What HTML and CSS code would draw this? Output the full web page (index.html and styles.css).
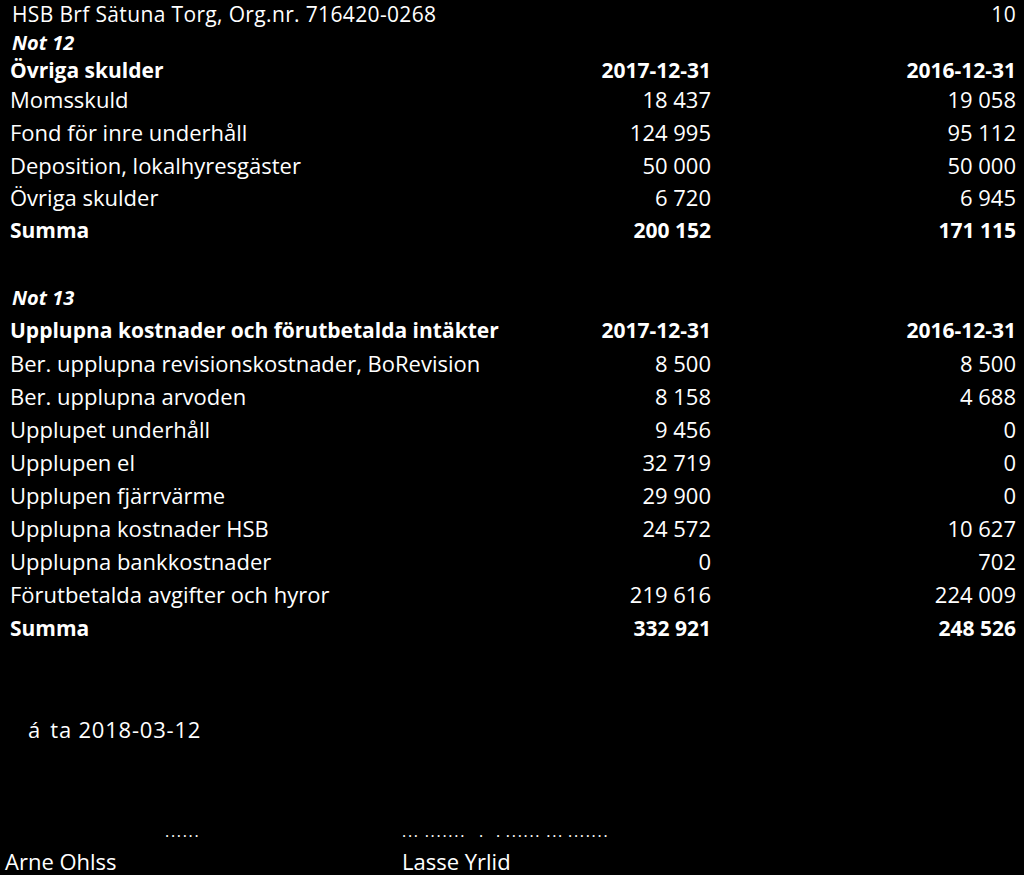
FILE: index.html
```html
<!DOCTYPE html>
<html lang="sv">
<head>
<meta charset="utf-8">
<title>Not 12 och 13</title>
<link rel="stylesheet" href="styles.css">
</head>
<body>
<div class="page">
  <div class="topline">
    <span>HSB Brf Sätuna Torg, Org.nr. 716420-0268</span>
    <span>10</span>
  </div>

  <section class="note note-12">
    <div class="note-title">Not 12</div>
    <div class="row head"><span>Övriga skulder</span><span class="num">2017-12-31</span><span class="num">2016-12-31</span></div>
    <div class="row"><span>Momsskuld</span><span class="num">18 437</span><span class="num">19 058</span></div>
    <div class="row"><span>Fond för inre underhåll</span><span class="num">124 995</span><span class="num">95 112</span></div>
    <div class="row"><span>Deposition, lokalhyresgäster</span><span class="num">50 000</span><span class="num">50 000</span></div>
    <div class="row"><span>Övriga skulder</span><span class="num">6 720</span><span class="num">6 945</span></div>
    <div class="row sum"><span>Summa</span><span class="num">200 152</span><span class="num">171 115</span></div>
  </section>

  <section class="note note-13">
    <div class="note-title">Not 13</div>
    <div class="row head"><span>Upplupna kostnader och förutbetalda intäkter</span><span class="num">2017-12-31</span><span class="num">2016-12-31</span></div>
    <div class="row"><span>Ber. upplupna revisionskostnader, BoRevision</span><span class="num">8 500</span><span class="num">8 500</span></div>
    <div class="row"><span>Ber. upplupna arvoden</span><span class="num">8 158</span><span class="num">4 688</span></div>
    <div class="row"><span>Upplupet underhåll</span><span class="num">9 456</span><span class="num">0</span></div>
    <div class="row"><span>Upplupen el</span><span class="num">32 719</span><span class="num">0</span></div>
    <div class="row"><span>Upplupen fjärrvärme</span><span class="num">29 900</span><span class="num">0</span></div>
    <div class="row"><span>Upplupna kostnader HSB</span><span class="num">24 572</span><span class="num">10 627</span></div>
    <div class="row"><span>Upplupna bankkostnader</span><span class="num">0</span><span class="num">702</span></div>
    <div class="row"><span>Förutbetalda avgifter och hyror</span><span class="num">219 616</span><span class="num">224 009</span></div>
    <div class="row sum"><span>Summa</span><span class="num">332 921</span><span class="num">248 526</span></div>
  </section>

  <div class="dateline"><span class="frag">á</span><span class="date">ta 2018-03-12</span></div>

  <div class="signatures">
    <div class="sig sig-left">
      <div class="dots"><span class="g">......</span></div>
      <div class="name">Arne Ohlss</div>
    </div>
    <div class="sig sig-right">
      <div class="dots"><span class="g">...</span><span class="g g-2">.......</span><span class="g g-3">.</span><span class="g g-4">.</span><span class="g g-5">......</span><span class="g g-6">...</span><span class="g g-7">.......</span></div>
      <div class="name">Lasse Yrlid</div>
    </div>
  </div>
</div>
</body>
</html>
```

FILE: styles.css
```css
html, body {
  margin: 0;
  padding: 0;
  background: #000;
}

body {
  color: #fff;
  font-family: "Open Sans", "Liberation Sans", sans-serif;
  font-size: 22px;
  width: 1024px;
  height: 875px;
  overflow: hidden;
}

.page {
  padding: 0 8px 0 10px;
}

.topline {
  display: flex;
  justify-content: space-between;
  font-size: 21px;
  letter-spacing: 0.35px;
  line-height: 28.6px;
  padding-left: 2px;
}

.note-title {
  font-size: 20px;
  font-weight: 700;
  font-style: italic;
  line-height: 27.2px;
  padding-left: 2px;
}

.row {
  display: grid;
  grid-template-columns: 1fr 160px 305px;
  line-height: 32.8px;
}

.row .num {
  text-align: right;
}

.row.head,
.row.sum {
  font-size: 21px;
  font-weight: 700;
}

.note-12 .row.head {
  line-height: 28.6px;
  margin-bottom: -1.4px;
}

.note-13 {
  margin-top: 33.6px;
}

.note-13 .note-title,
.note-13 .row {
  line-height: 33.1px;
}

.dateline {
  margin-top: 69px;
  padding-left: 18px;
  display: flex;
  line-height: 30px;
}

.dateline .date {
  margin-left: 10px;
  letter-spacing: 0.8px;
}

.signatures {
  display: flex;
  margin-top: 79px;
  margin-left: -5px;
}

.sig-left {
  width: 397px;
}

.dots {
  display: flex;
  font-size: 16px;
  line-height: 16px;
  letter-spacing: 1.7px;
}

.sig-left .dots {
  padding-left: 160px;
}

.g-2 { margin-left: 5px; }
.g-3 { margin-left: 13px; }
.g-4 { margin-left: 11px; }
.g-5 { margin-left: 4px; }
.g-6 { margin-left: 5px; }
.g-7 { margin-left: 4px; }

.name {
  line-height: 30px;
  margin-top: 7px;
}
```
